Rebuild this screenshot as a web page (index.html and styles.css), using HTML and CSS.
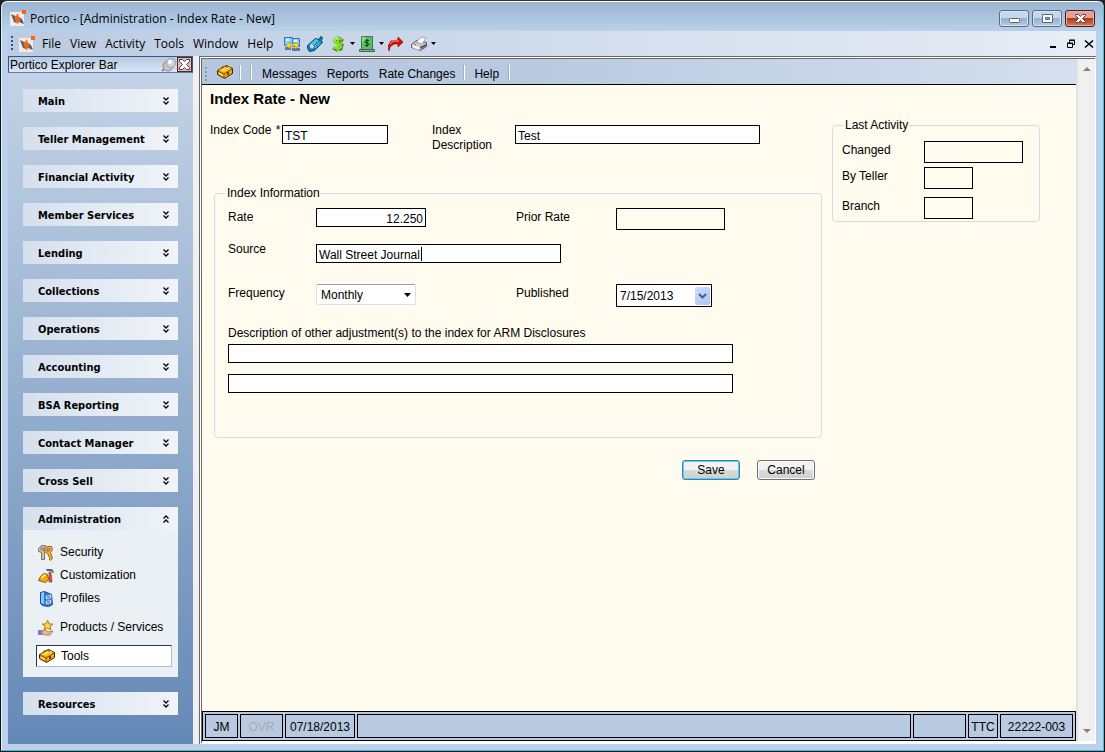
FILE: index.html
```html
<!DOCTYPE html>
<html lang="en">
<head>
<meta charset="utf-8">
<title>Portico - [Administration - Index Rate - New]</title>
<link rel="stylesheet" href="styles.css">
</head>
<body>
<svg class="defs" aria-hidden="true">
  <symbol id="logo" viewBox="0 0 16 16"><path fill="#f4ebe8" d="M0 2h14v14H0z"/><path fill="#56606c" d="M1 4l4 2 1 4 1 3-3-1zM9 7l3 2 2 5-3-1-3-2z"/><path fill="#f2660d" d="M12 0h4v4h-4zM3 5l3 1 2-3 1 5 2 2-2 1-1 4-2-4-2-1 2-1z"/></symbol>
  <symbol id="toolbox" viewBox="0 0 16 16"><path fill="#f8a900" stroke="#3a2500" d="M.5 6.500l9-5 6 3v5l-8 5-7-4z"/><path fill="#ffd34d" d="M2 6l8-4 4 2-7 4z"/><path fill="none" stroke="#8b5000" d="M1 7l6 3 8-5M7 10v4M4 5l1-2 5-1v2"/><path fill="#704000" d="M10 8h2v3h-2z"/><path fill="#fff0a0" d="M2 9l4 2v1L2 10z"/></symbol>
  <symbol id="down" viewBox="0 0 8 8"><path fill="none" stroke="#000" stroke-width="1.300" d="M1.500.5L4 3 6.500.5M1.500 4.500L4 7l2.500-2.500"/></symbol>
  <symbol id="up" viewBox="0 0 8 8"><path fill="none" stroke="#000" stroke-width="1.300" d="M1.500 3.500L4 1l2.500 2.500M1.500 7.500L4 5l2.500 2.500"/></symbol>
  <symbol id="caret" viewBox="0 0 5 3"><path d="M0 0h5L2.500 3z"/></symbol>
</svg>
<div class="window">
  <header class="titlebar">
    <svg class="icon"><use href="#logo"/></svg>
    <span class="title">Portico - [Administration - Index Rate - New]</span>
    <button class="winbtn" aria-label="Minimize"><svg viewBox="0 0 28 15"><rect x="9.500" y="7.500" width="10" height="4" rx="1" fill="#fff" stroke="#596578"/></svg></button>
    <button class="winbtn" aria-label="Maximize"><svg viewBox="0 0 28 15"><path fill="#fff" fill-rule="evenodd" stroke="#596578" d="M9.500 3.500h10v8h-10zM12.500 6.500v2h4v-2z"/></svg></button>
    <button class="winbtn winbtn-close" aria-label="Close"><svg viewBox="0 0 28 15"><path fill="#fff" stroke="#5c4048" d="M9.500 3.500h3l2 2 2-2h3v1l-3 3 3 3v1h-3l-2-2-2 2h-3v-1l3-3-3-3z"/></svg></button>
  </header>

  <nav class="menubar" aria-label="Application menu">
    <span class="grip grip-blue"></span>
    <svg class="icon menu-logo"><use href="#logo"/></svg>
    <button class="menu">File</button><button class="menu">View</button><button class="menu">Activity</button><button class="menu">Tools</button><button class="menu">Window</button><button class="menu">Help</button>
    <div class="tools">
      <button class="tool" aria-label="Transfer"><svg class="icon" viewBox="0 0 16 16"><path fill="#76d7fa" stroke="#4a6cc0" d="M.5 1.500h8v8h-8zM8.500 2.500h7v8h-7z"/><path fill="#dff7ff" d="M2 3h3v2H2zM10 4h3v2h-3z"/><path fill="#6672a8" d="M1 11h6v3H1zM8 12h8v3H8z"/><path fill="#ffdc1d" stroke="#a88c10" stroke-width=".6" d="M2 9l4-3v2h5V6l4 3-4 4v-3H6v3z"/></svg></button>
      <button class="tool" aria-label="Phone"><svg class="icon" viewBox="0 0 16 16"><path fill="#0b87b0" stroke="#064a66" d="M.5 9.500l8-7 4 1 1-3 2 1-1 3 1 2-8 8-5 1-2-3z"/><path fill="#5cc8de" d="M2 9l7-6 2 1-7 6z"/><circle cx="5" cy="10.500" r="2" fill="#e6c8f8"/><path stroke="#d8f7ff" stroke-dasharray="1 1" d="M8 10l5-4M8 12l6-5M7 8l4-3"/></svg></button>
      <button class="tool" aria-label="Cash"><svg class="icon" viewBox="0 0 16 16"><path fill="none" stroke="#44711d" stroke-width="3" d="M13 5l-3-2-4 1v2l6 3-1 4-4 1-4-2M9 1v14"/><path fill="none" stroke="#7fe01d" stroke-width="2.500" d="M12 4L8 2 5 3 4 5l7 4v2l-3 2-5-2M8 0v15"/><path fill="none" stroke="#caff83" d="M9 2L6 3 5 5"/></svg></button>
      <svg class="caret"><use href="#caret"/></svg>
      <button class="tool" aria-label="Checks"><svg class="icon" viewBox="0 0 16 16"><path fill="#5dbd61" stroke="#397f49" d="M2.500.5h11v13h-11z"/><path fill="#8edb86" d="M3 1h4L3 8z"/><path fill="none" stroke="#0b3b1c" d="M10 4.500H7l-1 1 1 1.500h2l1 1.500-1 1H6M8 3v8"/><path fill="#9ba6a0" stroke="#4b5a53" d="M.5 13.500h15v2H.5z"/></svg></button>
      <svg class="caret"><use href="#caret"/></svg>
      <button class="tool" aria-label="Forward"><svg class="icon" viewBox="0 0 16 16"><path fill="#df0d0a" stroke="#9b0908" stroke-width=".7" d="M1 15l-1-5 3-5 7-1V1l5 5-5 5V8H6l-4 3z"/><path stroke="#ff9c90" fill="none" d="M2 8l3-3h6"/></svg></button>
      <button class="tool" aria-label="Print"><svg class="icon" viewBox="0 0 16 16"><path fill="#c7c9c9" stroke="#5a5e60" d="M.5 8.500l5-4 10 2v4l-6 4-9-3z"/><path fill="#fff" stroke="#888" stroke-width=".7" d="M5 6l6-5 4 1-4 6z"/><path fill="#f5f5f5" d="M1 9l7 2v3l-6-2z"/><path fill="#555" d="M9 11l6-3v2l-5 3z"/><path fill="#dd6048" d="M3 8h2v1H3z"/></svg></button>
      <svg class="caret"><use href="#caret"/></svg>
    </div>
    <div class="childbtns">
      <button aria-label="Minimize form"><svg viewBox="0 0 10 10"><path d="M2 7h6v2H2z"/></svg></button>
      <button aria-label="Restore form"><svg viewBox="0 0 10 10"><path fill="none" stroke="#000" d="M3.500 4V1.500h5v4H6M3 1h6M1.500 4.500h5v4h-5zM1 4h6"/></svg></button>
      <button aria-label="Close form"><svg viewBox="0 0 10 10"><path fill="none" stroke="#000" stroke-width="1.600" d="M1 1.500l8 7M9 1.500l-8 7"/></svg></button>
    </div>
  </nav>

  <div class="workspace">
    <aside class="sidebar">
      <div class="explorer">
        <span class="explorer-title">Portico Explorer Bar</span>
        <button class="tool" aria-label="Pin"><svg class="icon" viewBox="0 0 16 16"><path stroke="#888" stroke-width="2" d="M1 14l4-3"/><ellipse cx="7" cy="9" rx="5" ry="5" fill="#c4c4c4" stroke="#8c8c8c"/><circle cx="10" cy="6" r="4.500" fill="#d3d3d3" stroke="#a2a2a2"/><circle cx="9" cy="5" r="2" fill="#fff"/></svg></button>
        <button class="explorer-close" aria-label="Close explorer bar"><svg viewBox="0 0 13 13"><path fill="#fff" stroke="#414653" d="M1.500 1.500h3l2 2 2-2h3v2l-3 3 3 3v2h-3l-2-2-2 2h-3v-2l3-3-3-3z"/></svg></button>
      </div>
      <div class="groups">
        <button class="group">Main<svg><use href="#down"/></svg></button>
        <button class="group">Teller Management<svg><use href="#down"/></svg></button>
        <button class="group">Financial Activity<svg><use href="#down"/></svg></button>
        <button class="group">Member Services<svg><use href="#down"/></svg></button>
        <button class="group">Lending<svg><use href="#down"/></svg></button>
        <button class="group">Collections<svg><use href="#down"/></svg></button>
        <button class="group">Operations<svg><use href="#down"/></svg></button>
        <button class="group">Accounting<svg><use href="#down"/></svg></button>
        <button class="group">BSA Reporting<svg><use href="#down"/></svg></button>
        <button class="group">Contact Manager<svg><use href="#down"/></svg></button>
        <button class="group">Cross Sell<svg><use href="#down"/></svg></button>
        <section class="open-group">
          <button class="group">Administration<svg><use href="#up"/></svg></button>
          <div class="links">
            <a href="#security"><svg class="icon" viewBox="0 0 16 16"><path fill="#c9c2ae" fill-rule="evenodd" stroke="#77736c" d="M.5 3.500l3-3h4l2 3-2 3-1 1v7h-3v-7l-3-1zM3 3v2h3V3z"/><path fill="#f4ae3c" fill-rule="evenodd" stroke="#9a641e" d="M6.500 3.500l3-2h4l1 3-2 3 2 6-2 2-1-1v-2l-2-4-3-2zM9 4v2h2l1-2z"/></svg>Security</a>
            <a href="#customization"><svg class="icon" viewBox="0 0 16 16"><path fill="#f4a90f" stroke="#91550b" d="M.5 12.500l2-4 3-3 4 1 1 5-3 3z"/><path fill="#ffe175" d="M3 9l3-3 2 1-4 4z"/><path fill="#5b6270" d="M8 1h6l2 3-1 1-2-2H9z"/><path fill="#e0533b" stroke="#7b3428" stroke-width=".6" d="M11 4h2l1 10h-3z"/></svg>Customization</a>
            <a href="#profiles"><svg class="icon" viewBox="0 0 16 16"><path fill="#2677d2" stroke="#164c9a" d="M2.500 1.500l4-1 7 3 1 10-4 2-6-1-2-2z"/><path fill="#80cbff" d="M3 2l3-1v12l-3-1z"/><path fill="#c8def6" stroke="#5986c4" d="M7.500 4.500l5-1 1 1v3l-5 1-1-1zM7.500 9.500l6-1v4l-5 1-1-1z"/><path stroke="#28569a" d="M9 6h3M9 11h3"/></svg>Profiles</a>
            <a class="spaced" href="#products"><svg class="icon" viewBox="0 0 16 16"><path fill="#ffd84c" stroke="#b67b0e" d="M9.500 0l1.500 4h4l-3 2 1 4-3.500-2L6 10l1-4-3-2h4z"/><path fill="#f0bd86" stroke="#8f6034" stroke-width=".7" d="M4 11l3-1 3 2 5-1-3 4H7l-3-1z"/><path fill="#8e72d8" d="M0 10h4v5H0z"/></svg>Products / Services</a>
            <a class="current" href="#tools"><svg class="icon"><use href="#toolbox"/></svg>Tools</a>
          </div>
        </section>
        <button class="group">Resources<svg><use href="#down"/></svg></button>
      </div>
    </aside>

    <main class="document">
      <div class="page">
        <nav class="toolbar" aria-label="Form menu">
          <span class="grip"></span>
          <button class="tool" aria-label="Toolbox"><svg class="toolbox-icon"><use href="#toolbox"/></svg></button>
          <span class="sep sep-first"></span><span class="sep sep-first"></span>
          <button class="menu">Messages</button><button class="menu">Reports</button><button class="menu">Rate Changes</button>
          <span class="sep"></span><button class="menu">Help</button><span class="sep"></span>
        </nav>
        <form class="form" onsubmit="return false">
          <h1>Index Rate - New</h1>
          <div class="columns">
            <div class="primary">
              <div class="identity">
                <label for="code">Index Code <span class="required">*</span></label>
                <input id="code" type="text" value="TST">
                <label class="desc-label" for="desc">Index Description</label>
                <input id="desc" type="text" value="Test">
              </div>
              <fieldset class="info">
                <legend>Index Information</legend>
                <div class="info-grid">
                  <label for="rate">Rate</label><input class="number" id="rate" type="text" value="12.250">
                  <label for="prior">Prior Rate</label><input class="readonly prior" id="prior" type="text" readonly>
                  <label class="raised" for="source">Source</label>
                  <div class="source"><input id="source" type="text" value="Wall Street Journal"><span class="text-caret"></span></div>
                  <label for="freq">Frequency</label>
                  <div class="select-wrap freq"><select id="freq"><option>Monthly</option></select><svg viewBox="0 0 7 4"><path d="M0 0h7L3.500 4z"/></svg></div>
                  <label for="published">Published</label>
                  <div class="select-wrap date"><select id="published"><option>7/15/2013</option></select><span class="date-arrow"><svg viewBox="0 0 9 6"><path fill="none" stroke="#465d87" stroke-width="2" d="M1 1l3.500 3.500L8 1"/></svg></span></div>
                </div>
                <div class="adjustments">
                  <label for="adj1">Description of other adjustment(s) to the index for ARM Disclosures</label>
                  <input id="adj1" type="text">
                  <input type="text" aria-label="Description of other adjustment(s), line 2">
                </div>
              </fieldset>
              <div class="actions"><button class="btn btn-default" type="submit">Save</button><button class="btn" type="button">Cancel</button></div>
            </div>
            <fieldset class="activity">
              <legend>Last Activity</legend>
              <div class="activity-row"><label for="changed">Changed</label><input class="readonly" id="changed" type="text" readonly></div>
              <div class="activity-row"><label for="teller">By Teller</label><input class="readonly short" id="teller" type="text" readonly></div>
              <div class="activity-row"><label for="branch">Branch</label><input class="readonly short" id="branch" type="text" readonly></div>
            </fieldset>
          </div>
        </form>
        <footer class="status">
          <span class="cell-user">JM</span><span class="cell-ovr">OVR</span><span class="cell-date">07/18/2013</span><span class="cell-message"></span><span class="cell-blank"></span><span class="cell-ttc">TTC</span><span class="cell-id">22222-003</span>
        </footer>
      </div>
      <div class="scrollbar" aria-hidden="true">
        <svg viewBox="0 0 8 4"><path fill="#858585" d="M4 0l4 4H0z"/></svg>
        <svg viewBox="0 0 8 4"><path fill="#858585" d="M0 0h8L4 4z"/></svg>
      </div>
    </main>
  </div>
</div>
</body>
</html>
```
FILE: styles.css
```css
* { box-sizing: border-box; }
body { margin: 0; background: #222; color: #000; font: 12px/15px "Liberation Sans", Arial, sans-serif; }
button, input, select { font: inherit; color: inherit; margin: 0; border-radius: 0; }
button { padding: 0; border: 0; background: none; }
.defs { position: absolute; width: 0; height: 0; }
.icon { width: 16px; height: 16px; flex: none; }

.window {
  display: flex; flex-direction: column; min-height: 100vh;
  padding: 0 8px 7px 7px; border: 1px solid #111; border-top-color: #333;
  border-radius: 7px 7px 0 0;
  background: linear-gradient(#99b4d1, #b9d1ea 30px);
  box-shadow: inset 0 1px #fff, inset -1px -1px #34c5dc, inset 1px 0 #e3f0fa;
}
.titlebar { display: flex; align-items: center; gap: 3px; height: 30px; padding: 4px 1px 0 2px; font-family: "Open Sans", sans-serif; }
.title { flex: 1; padding-left: 1px; }
.winbtn { width: 30px; height: 17px; border: 1px solid #566d87; border-radius: 3px; background: linear-gradient(#c6d9ec 45%, #94b1cf 50%, #b5cde6); box-shadow: inset 0 0 0 1px #d8e6f4; }
.winbtn svg { display: block; width: 28px; height: 15px; }
.winbtn-close { border-color: #451922; background: linear-gradient(#e2a195 45%, #b7351b 50%, #d07b50); box-shadow: inset 0 0 0 1px #e7b2a5; }

.menubar { display: flex; align-items: center; height: 25px; padding: 0 2px 0 3px; background: linear-gradient(90deg, #bacbe2, #e8edf5); font-family: "Open Sans", sans-serif; }
.grip { width: 2px; height: 15px; background: repeating-linear-gradient(#8f98a7 0 2px, transparent 2px 4px); }
.grip-blue { background: repeating-linear-gradient(#31507f 0 2px, transparent 2px 4px); }
.menu-logo { margin: 0 2px 0 6px; }
.menu { padding: 0 5px; }
.menubar .menu { padding: 0 4px 0 5px; }
.tools { display: flex; align-items: center; gap: 7px; flex: 1; padding-left: 7px; }
.tool { display: flex; }
.tools .caret { width: 5px; height: 3px; margin: 0 -3px; }
.childbtns { display: flex; gap: 8px; }
.childbtns svg { display: block; width: 10px; height: 10px; }

.workspace { display: flex; flex: 1; gap: 6px; background: #f0f0f0; }
.sidebar { display: flex; flex-direction: column; flex: 0 0 185px; background: linear-gradient(#c6d5e8, #6488b6); }
.explorer { display: flex; align-items: center; height: 17px; border: 1px solid #3e587a; border-bottom-color: #557eb1; background: linear-gradient(#b5c8e0, #dce6f3); }
.explorer-title { flex: 1; padding: 1px 0 0 1px; }
.explorer-close { width: 15px; height: 15px; border: 1px solid #53242a; background: #e6b9b0; }
.explorer-close svg { display: block; width: 13px; height: 13px; }
.groups { display: flex; flex-direction: column; gap: 15px; padding: 16px 15px; }
.group { display: flex; align-items: center; justify-content: space-between; width: 100%; height: 23px; padding: 1px 8px 0 15px; background: linear-gradient(90deg, #d5e0ed, #f1f4f9); font: bold 11px/15px "DejaVu Sans Condensed", "DejaVu Sans", sans-serif; font-stretch: condensed; text-align: left; }
.group svg { width: 8px; height: 8px; }
.open-group { background: #eaf0f4; }
.links { display: flex; flex-direction: column; padding: 11px 6px 10px 13px; }
.links a { display: flex; align-items: center; gap: 6px; height: 23px; padding-left: 2px; color: #000; text-decoration: none; }
.links .spaced { margin: 6px 0; }
.links .current { height: 22px; border: 1px solid #a9bdd6; border-color: #22384c #a9bdd6 #a9bdd6 #22384c; background: #fff; }

.document { display: flex; flex: 1; min-width: 0; padding-bottom: 2px; background: #fff; border: 1px solid #fff; border-top: 3px double #686868; border-left: 3px double #686868; }
.page { display: flex; flex-direction: column; flex: 1; min-width: 0; background: #fffbef; }
.toolbar { display: flex; align-items: center; height: 26px; padding: 5px 3px 0; border-bottom: 1px solid #000; background: linear-gradient(90deg, #b5c6df, #b8c9e0 35%, #d5dfed); }
.toolbox-icon { width: 18px; height: 16px; margin: 0 6px 4px 9px; }
.toolbar .sep { width: 1px; height: 15px; margin: 0 4px 4px; background: #fff; box-shadow: -1px 0 #a1afc3; }
.toolbar .sep-first { margin: 0 10px 4px 0; }
.toolbar .sep-first + .menu { padding-left: 0; }
.toolbar .sep + .menu { padding-right: 6px; }
.toolbar .sep-first + .menu { padding-right: 5px; }
.form { flex: 1; padding: 6px 8px 0; }
.form h1 { margin: 0 0 15px; font-size: 15px; line-height: 16px; }
.columns { display: flex; align-items: flex-start; gap: 10px; }
.primary { flex: 0 1 612px; }
.form input { height: 19px; padding: 2px 2px 0; border: 1px solid #000; background: #fff; min-width: 0; outline: 0; }
.form input.readonly { height: 22px; background: #fffbef; }
.identity { display: grid; grid-template-columns: 72px 106px minmax(0, 127px) 245px; align-items: start; height: 64px; padding-top: 3px; }
.identity label { margin-top: -2px; }
.identity .desc-label { padding: 0 8px 0 44px; }
.required { padding-left: 1px; }
fieldset { min-width: 0; margin: 0; padding: 0; border: 1px solid #d2dce6; border-radius: 4px; }
legend { padding: 0 0 0 2px; margin-left: 10px; }
.info { margin-left: 4px; padding: 7px 0 44px; }
.info-grid { display: grid; grid-template-columns: 88px 200px 100px 1fr; grid-template-rows: 34px 42px 42px; align-items: start; justify-items: start; margin: 0 13px; }
.info-grid label { padding-top: 2px; }
.info-grid .raised { padding-top: 0; }
.number { width: 110px; text-align: right; }
.prior { width: 109px; }
.source { display: grid; grid-column: 2 / -1; width: 245px; padding-top: 2px; position: relative; }
.text-caret { position: absolute; left: 105px; top: 5px; width: 1px; height: 14px; background: #000; }
.select-wrap { display: grid; position: relative; }
.select-wrap select { width: 100%; height: 100%; padding: 1px 4px 0; border: 1px solid #d9dfe8; background: #fff; appearance: none; outline: 0; }
.freq { width: 100px; height: 21px; }
.freq select { border-top-color: #a0a0a0; border-radius: 2px; }
.freq svg { position: absolute; right: 5px; top: 9px; width: 7px; height: 4px; pointer-events: none; }
.date { width: 96px; height: 23px; }
.date select { padding-left: 3px; border-color: #000; }
.date-arrow { position: absolute; right: 2px; top: 3px; display: grid; place-items: center; width: 15px; height: 18px; border-radius: 2px; background: linear-gradient(135deg, #d0dcfa, #a8c5f8); pointer-events: none; }
.date-arrow svg { width: 9px; height: 6px; }
.adjustments { display: grid; gap: 11px; max-width: 505px; margin: 0 13px; }
.adjustments label { margin-bottom: -8px; }
.actions { display: flex; justify-content: flex-end; gap: 17px; padding: 22px 7px 0 0; }
.btn { width: 58px; height: 20px; border: 1px solid #707070; border-radius: 3px; background: linear-gradient(#f2f2f2 50%, #dadada 50%, #cfcfcf); box-shadow: inset 0 0 0 1px #fafafa; }
.btn-default { border-color: #3c7fb1; box-shadow: inset 0 0 0 1px #4fd0f5; }
.activity { flex: 0 0 208px; padding: 8px 0 2px; margin-top: -4px; }
.activity-row { display: grid; grid-template-columns: 82px 99px; align-items: start; min-height: 30px; margin-left: 9px; }
.activity-row label { padding-top: 2px; }
.activity-row:nth-of-type(1) { min-height: 26px; }
.activity-row:nth-of-type(3) { min-height: 22px; }
.activity-row .short { width: 49px; }

.status { display: flex; gap: 2px; height: 30px; padding: 2px; border: 1px solid #000; background: #b8c9e0; }
.status span { padding: 5px 2px 0; border: 1px solid #000; text-align: center; white-space: nowrap; }
.cell-user { flex: 0 0 33px; }
.status .cell-ovr { flex: 0 0 43px; color: #a5a9ae; }
.cell-date { flex: 0 0 70px; }
.cell-message { flex: 1; }
.cell-blank { flex: 0 0 53px; }
.cell-ttc { flex: 0 0 30px; }
.cell-id { flex: 0 0 73px; }
.scrollbar { display: flex; flex-direction: column; align-items: center; justify-content: space-between; flex: 0 0 19px; padding: 8px 0; border-left: 2px solid #e2e2e2; background: #f0f0f0; }
.scrollbar svg { width: 8px; height: 4px; }
```
